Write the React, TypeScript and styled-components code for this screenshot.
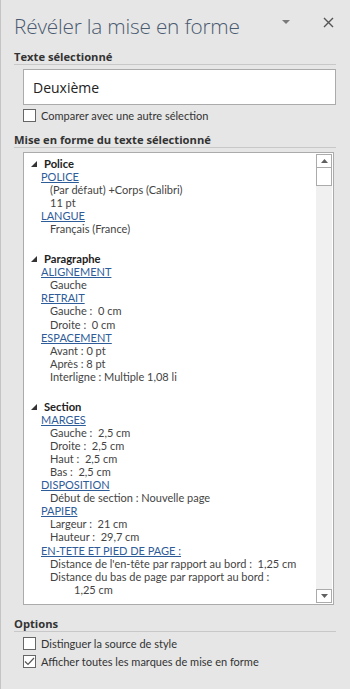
import React from 'react';
import styled, { createGlobalStyle } from 'styled-components';

const GlobalStyle = createGlobalStyle`
  html, body {
    margin: 0;
    padding: 0;
    background: #e6e6e6;
  }
  body {
    font-family: 'Open Sans', 'Noto Sans', 'Liberation Sans', sans-serif;
    color: #333;
  }
`;

type Line =
  | { kind: 'link'; text: string }
  | { kind: 'value'; text: string; wrap?: boolean };

type Group = { title: string; lines: Line[] };

const groups: Group[] = [
  {
    title: 'Police',
    lines: [
      { kind: 'link', text: 'POLICE' },
      { kind: 'value', text: '(Par défaut) +Corps (Calibri)' },
      { kind: 'value', text: '11 pt' },
      { kind: 'link', text: 'LANGUE' },
      { kind: 'value', text: 'Français (France)' },
    ],
  },
  {
    title: 'Paragraphe',
    lines: [
      { kind: 'link', text: 'ALIGNEMENT' },
      { kind: 'value', text: 'Gauche' },
      { kind: 'link', text: 'RETRAIT' },
      { kind: 'value', text: 'Gauche :  0 cm' },
      { kind: 'value', text: 'Droite :  0 cm' },
      { kind: 'link', text: 'ESPACEMENT' },
      { kind: 'value', text: 'Avant : 0 pt' },
      { kind: 'value', text: 'Après : 8 pt' },
      { kind: 'value', text: 'Interligne : Multiple 1,08 li' },
    ],
  },
  {
    title: 'Section',
    lines: [
      { kind: 'link', text: 'MARGES' },
      { kind: 'value', text: 'Gauche :  2,5 cm' },
      { kind: 'value', text: 'Droite :  2,5 cm' },
      { kind: 'value', text: 'Haut :  2,5 cm' },
      { kind: 'value', text: 'Bas :  2,5 cm' },
      { kind: 'link', text: 'DISPOSITION' },
      { kind: 'value', text: 'Début de section : Nouvelle page' },
      { kind: 'link', text: 'PAPIER' },
      { kind: 'value', text: 'Largeur :  21 cm' },
      { kind: 'value', text: 'Hauteur :  29,7 cm' },
      { kind: 'link', text: 'EN-TETE ET PIED DE PAGE :' },
      { kind: 'value', text: "Distance de l'en-tête par rapport au bord :  1,25 cm" },
      { kind: 'value', text: 'Distance du bas de page par rapport au bord :' },
      { kind: 'value', text: '1,25 cm', wrap: true },
    ],
  },
];

const App = (): JSX.Element => {
  return (
    <>
      <GlobalStyle />
      <Pane>
        <Header>
          <Title>Révéler la mise en forme</Title>
          <HeaderIcons>
            <svg width="10" height="6" viewBox="0 0 10 6">
              <polygon points="1,1 9,1 5,5" fill="#7a7a7a" />
            </svg>
            <svg width="11" height="11" viewBox="0 0 11 11">
              <path d="M1 1 L10 10 M10 1 L1 10" stroke="#555" strokeWidth="1.4" />
            </svg>
          </HeaderIcons>
        </Header>

        <SectionTitle>Texte sélectionné</SectionTitle>
        <Indent bottom={8}>
          <TextBox>Deuxième</TextBox>
          <CheckRow top={1}>
            <Box />
            <span>Comparer avec une autre sélection</span>
          </CheckRow>
        </Indent>

        <SectionTitle>Mise en forme du texte sélectionné</SectionTitle>
        <Indent bottom={11}>
          <ListBox>
            <ListContent>
              {groups.map((g) => (
                <GroupBlock key={g.title}>
                  <GroupHead>
                    <svg width="6" height="6" viewBox="0 0 6 6">
                      <polygon points="6,0 6,6 0,6" fill="#333" />
                    </svg>
                    <span>{g.title}</span>
                  </GroupHead>
                  {g.lines.map((l, i) =>
                    l.kind === 'link' ? (
                      <LinkLine key={i}>{l.text}</LinkLine>
                    ) : (
                      <ValueLine key={i} wrap={l.wrap ? 1 : 0}>
                        {l.text}
                      </ValueLine>
                    ),
                  )}
                </GroupBlock>
              ))}
            </ListContent>
            <ScrollBar>
              <ScrollButton>
                <svg width="7" height="4" viewBox="0 0 7 4">
                  <polygon points="0,4 7,4 3.5,0" fill="#606060" />
                </svg>
              </ScrollButton>
              <Thumb />
              <Track />
              <ScrollButton>
                <svg width="7" height="4" viewBox="0 0 7 4">
                  <polygon points="0,0 7,0 3.5,4" fill="#606060" />
                </svg>
              </ScrollButton>
            </ScrollBar>
          </ListBox>
        </Indent>

        <SectionTitle>Options</SectionTitle>
        <Indent bottom={0}>
          <CheckRow top={-2}>
            <Box />
            <span>Distinguer la source de style</span>
          </CheckRow>
          <CheckRow top={0}>
            <Box>
              <svg width="11" height="9" viewBox="0 0 11 9">
                <path d="M1 4.5 L4 7.5 L10 1" stroke="#555" strokeWidth="1.2" fill="none" />
              </svg>
            </Box>
            <span>Afficher toutes les marques de mise en forme</span>
          </CheckRow>
        </Indent>
      </Pane>
    </>
  );
};

const Pane = styled.div`
  box-sizing: border-box;
  width: 350px;
  height: 689px;
  border-left: 1px solid #c4c4c4;
  padding: 0 14px 0 13px;
  background: #e6e6e6;
  display: flex;
  flex-direction: column;
`;

const Header = styled.div`
  display: flex;
  align-items: flex-start;
  justify-content: space-between;
  height: 49px;
`;

const Title = styled.div`
  font-size: 20.8px;
  line-height: 26px;
  font-weight: 300;
  color: #4a5a70;
  letter-spacing: -0.2px;
  margin-top: 13px;
`;

const HeaderIcons = styled.div`
  display: flex;
  align-items: center;
  gap: 32px;
  height: 12px;
  margin-right: 2px;
  margin-top: 16px;
`;

const SectionTitle = styled.div`
  font-size: 11.2px;
  font-weight: 700;
  color: #333;
  line-height: 15px;
  border-bottom: 1px solid #c8c8c8;
  margin-bottom: 4px;
`;

const Indent = styled.div<{ bottom: number }>`
  padding-left: 9px;
  margin-bottom: ${(p) => p.bottom}px;
  display: flex;
  flex-direction: column;
`;

const TextBox = styled.div`
  box-sizing: border-box;
  height: 36px;
  background: #fff;
  border: 1px solid #ababab;
  padding-left: 9px;
  display: flex;
  align-items: center;
  font-size: 14px;
  color: #222;
`;

const CheckRow = styled.div<{ top: number }>`
  display: flex;
  align-items: center;
  gap: 5px;
  height: 18px;
  font-family: Lato, 'Open Sans', sans-serif;
  font-size: 11px;
  color: #333;
  margin-top: ${(p) => p.top}px;
`;

const Box = styled.div`
  box-sizing: border-box;
  width: 13px;
  height: 13px;
  border: 1px solid #666;
  background: #fff;
  display: flex;
  align-items: center;
  justify-content: center;
`;

const ListBox = styled.div`
  box-sizing: border-box;
  height: 453px;
  background: #fff;
  border: 1px solid #ababab;
  display: flex;
  margin-right: 2px;
`;

const ListContent = styled.div`
  flex: 1;
  padding: 4px 0 0 7px;
  font-family: Lato, 'Open Sans', sans-serif;
  font-size: 11px;
  line-height: 13.1px;
  overflow: hidden;
`;

const GroupBlock = styled.div`
  margin-bottom: 16.5px;
`;

const GroupHead = styled.div`
  display: flex;
  align-items: center;
  gap: 7px;
  font-size: 11.2px;
  font-weight: 700;
  color: #222;
  svg {
    margin-top: 1px;
  }
`;

const LinkLine = styled.div`
  padding-left: 10px;
  color: #2e5c99;
  text-decoration: underline;
`;

const ValueLine = styled.div<{ wrap: number }>`
  padding-left: ${(p) => (p.wrap ? 43 : 19)}px;
  color: #444;
  white-space: pre;
`;

const ScrollBar = styled.div`
  width: 16px;
  background: #f0f0f0;
  margin: 1px 1px 1px 0;
  display: flex;
  flex-direction: column;
`;

const ScrollButton = styled.div`
  box-sizing: border-box;
  height: 14px;
  border: 1px solid #ababab;
  background: #fff;
  display: flex;
  align-items: center;
  justify-content: center;
`;

const Thumb = styled.div`
  box-sizing: border-box;
  height: 18px;
  border: 1px solid #ababab;
  border-top: none;
  background: #fff;
`;

const Track = styled.div`
  flex: 1;
`;

export default App;
